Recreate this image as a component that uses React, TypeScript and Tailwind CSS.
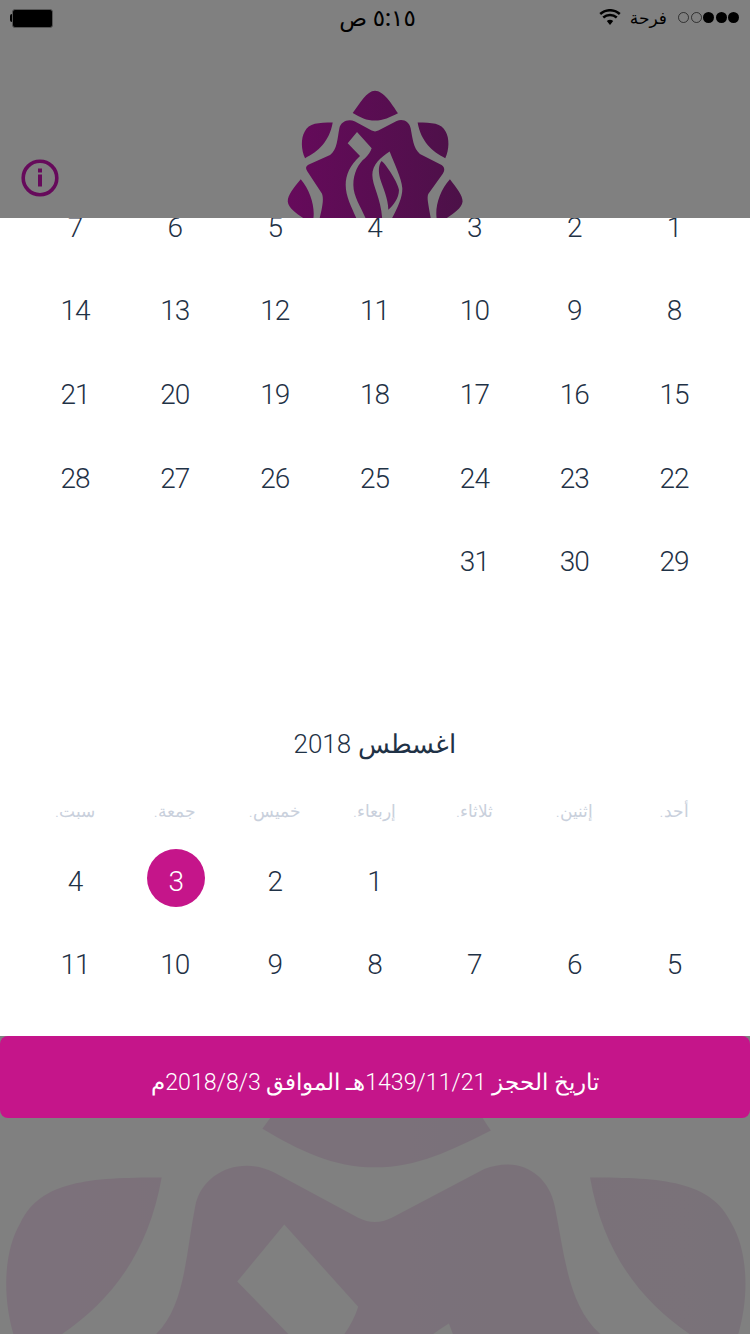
const FONT = "font-['Roboto','Noto_Sans','DejaVu_Sans',sans-serif]";

function Logo({ id, bg, className }: { id: string; bg: string; className: string }) {
  return (
    <svg viewBox="0 0 750 1000" className={className}>
      <defs>
        <linearGradient id={id} gradientUnits="userSpaceOnUse" x1="110" y1="0" x2="640" y2="0">
          <stop offset="0" stopColor="#660a5b" />
          <stop offset="1" stopColor="#4c1148" />
        </linearGradient>
      </defs>
      <g fill={`url(#${id})`}>
        <path d="M308 129C330 100 350 62 375 62C400 62 425 100 444 130C420 142 400 152 375 152C350 152 330 142 308 129Z" />
        <path d="M248 158C205 158 176 160 164 185C152 205 153 240 165 265C205 245 238 215 248 158Z" />
        <path d="M503 158C546 158 575 160 587 185C599 205 598 240 586 265C546 245 513 215 503 158Z" />
        <path d="M152 328C130 355 113 375 113 395C115 415 140 432 160 445C175 460 190 460 190 445C195 410 180 360 152 328Z" />
        <path d="M600 328C620 355 638 375 638 395C636 415 610 432 590 445C575 460 560 460 560 445C555 410 570 360 600 328Z" />
        <path d="M268 175C272 155 295 145 315 155L365 182Q375 187 385 182L440 153C460 145 478 155 482 175C488 205 490 235 510 252L575 285C585 292 585 302 578 312L535 372C530 385 535 400 545 460L205 460C218 410 222 385 215 370L172 305C165 295 167 288 178 283L240 255C262 240 262 205 268 175Z" />
      </g>
      <g fill={bg}>
        <path d="M321 186L293 220L330 258C300 285 287 315 287 345C287 385 310 420 325 460L352 460C340 420 310 385 310 345C310 310 325 280 345 265C355 255 362 245 365 235Z" />
        <path d="M419 245C392 262 367 285 367 315C367 350 397 390 397 460L418 460C440 420 458 385 457 355C455 325 430 275 419 245Z" />
      </g>
      <path fill={`url(#${id})`} d="M395 273C385 285 385 305 390 325C397 350 415 385 415 420C430 405 447 385 447 360C445 340 410 285 395 273Z" />
    </svg>
  );
}

const WEEK1 = [
  ["1", "2", "3", "4", "5", "6", "7"],
  ["8", "9", "10", "11", "12", "13", "14"],
  ["15", "16", "17", "18", "19", "20", "21"],
  ["22", "23", "24", "25", "26", "27", "28"],
  ["29", "30", "31", "", "", "", ""],
];
const WEEK2 = [
  ["", "", "", "1", "2", "3", "4"],
  ["5", "6", "7", "8", "9", "10", "11"],
];
const DAYS = ["أحد.", "إثنين.", "ثلاثاء.", "إربعاء.", "خميس.", "جمعة.", "سبت."];

function Row({ cells }: { cells: string[] }) {
  return (
    <div className="grid grid-cols-7 h-[83.6px]">
      {cells.map((c, i) => (
        <div key={i} className="flex items-center justify-center">
          {c === "3" && cells[6] === "4" ? (
            <span className="flex items-center justify-center w-[58px] h-[58px] -mt-[7px] pt-[7px] translate-x-[1px] rounded-full bg-[#c5158a] text-white text-[28px] font-light tracking-[-1px]">
              {c}
            </span>
          ) : (
            <span className="text-[#1f3246] text-[28px] font-light tracking-[-1px] leading-none">{c}</span>
          )}
        </div>
      ))}
    </div>
  );
}

export default function App() {
  return (
    <div dir="ltr" className={`relative h-[1334px] w-[750px] overflow-hidden bg-[#808080] ${FONT}`}>
      <Logo id="big" bg="#808080" className="absolute left-[-255px] top-[912px] w-[1260px] h-[1680px] opacity-[0.12]" />
      <div className="relative h-[218px] overflow-hidden">
        <div className="relative z-10 flex items-center justify-between h-[36px] pl-[10px] pr-[11px]">
          <div className="flex items-center w-[200px]">
            <span className="w-[2px] h-[8px] bg-black rounded-l-sm" />
            <span className="w-[41px] h-[19px] bg-black rounded-[3px] border border-[#555]" />
          </div>
          <div dir="rtl" className="ml-[6px] text-[23px] leading-none font-medium text-black">٥:١٥ ص</div>
          <div className="flex items-center justify-end w-[200px] gap-[9px]">
            <svg viewBox="0 0 24 18" className="w-[22px] h-[16px] -mt-[3px]">
              <path d="M12 18l3.6-4.4a5.6 5.6 0 0 0-7.2 0z" fill="#000" />
              <path d="M4.4 9.6a11.4 11.4 0 0 1 15.2 0M1 5.6a16.4 16.4 0 0 1 22 0" fill="none" stroke="#000" strokeWidth="2.8" />
            </svg>
            <span dir="rtl" className="text-[17px] leading-none text-black">فرحة</span>
            <div className="flex gap-[1.5px] ml-[2px] -mt-[2px]">
              {[0, 1].map((i) => (
                <span key={i} className="w-[11px] h-[11px] rounded-full border border-black/60" />
              ))}
              {[0, 1, 2].map((i) => (
                <span key={i} className="w-[11px] h-[11px] rounded-full bg-black" />
              ))}
            </div>
          </div>
        </div>
        <Logo id="small" bg="#808080" className="absolute left-[250px] top-[70px] w-[250px] h-[333px]" />
        <svg viewBox="0 0 38 38" className="absolute left-[21px] top-[159px] w-[38px] h-[38px]">
          <circle cx="19" cy="19" r="16.8" fill="none" stroke="#660a5b" strokeWidth="3.6" />
          <rect x="17" y="15.5" width="4" height="12" fill="#660a5b" />
          <rect x="17" y="9.5" width="4" height="4" fill="#660a5b" />
        </svg>
      </div>

      <div dir="rtl" className="relative h-[818px] overflow-hidden bg-white pl-[25px] pr-[26px]">
        <div className="-mt-[32px]">
          {WEEK1.map((r, i) => (
            <Row key={i} cells={r} />
          ))}
        </div>
        <div className="mt-[121px] h-[40px] flex items-center justify-center text-[26px] font-light text-[#1f3246]">
          اغسطس 2018
        </div>
        <div className="mt-[35px] grid grid-cols-7 h-[24px] items-center">
          {DAYS.map((d) => (
            <span key={d} className="text-center text-[16.5px] font-light text-[#c9d0dc]">{d}</span>
          ))}
        </div>
        <div className="mt-[16px]">
          {WEEK2.map((r, i) => (
            <Row key={i} cells={r} />
          ))}
        </div>
      </div>

      <div dir="rtl" className="relative h-[82px] pt-[11px] flex items-center justify-center rounded-[8px] bg-[#c5158a] text-white text-[23.2px] font-light">
        تاريخ الحجز 1439/11/21هـ الموافق 2018/8/3م
      </div>
    </div>
  );
}
